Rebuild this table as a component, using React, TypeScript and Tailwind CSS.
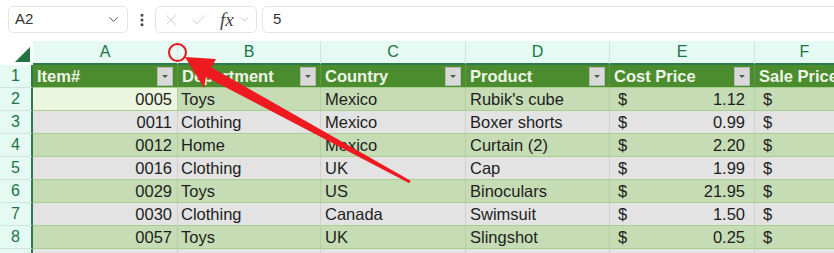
import { Check, ChevronDown, EllipsisVertical, X } from "lucide-react";

const COLS = [
  { key: "A", w: "w-[145px]" },
  { key: "B", w: "w-[143px]" },
  { key: "C", w: "w-[145px]" },
  { key: "D", w: "w-[144px]" },
  { key: "E", w: "w-[145px]" },
  { key: "F", w: "w-[100px]" },
];

const HEADERS = ["Item#", "Department", "Country", "Product", "Cost Price", "Sale Price"];

const ROWS = [
  ["0005", "Toys", "Mexico", "Rubik's cube", "1.12"],
  ["0011", "Clothing", "Mexico", "Boxer shorts", "0.99"],
  ["0012", "Home", "Mexico", "Curtain (2)", "2.20"],
  ["0016", "Clothing", "UK", "Cap", "1.99"],
  ["0029", "Toys", "US", "Binoculars", "21.95"],
  ["0030", "Clothing", "Canada", "Swimsuit", "1.50"],
  ["0057", "Toys", "UK", "Slingshot", "0.25"],
];

function FilterButton() {
  return (
    <div className="ml-auto mr-[4px] flex h-[19px] w-[16px] shrink-0 items-center justify-center border border-[#b9b9b9] bg-[#d9d9d9]">
      <div className="h-0 w-0 border-x-[3px] border-t-[3px] border-x-transparent border-t-[#555]" />
    </div>
  );
}

function RowHeader({ n }: { n?: number }) {
  return (
    <div className="flex h-full w-[33px] shrink-0 items-center justify-center border-r-2 border-b border-r-[#2c7a4c] border-b-[#cfe6da] bg-[#e4faf2] text-[16px] text-[#217346]">
      {n}
    </div>
  );
}

export default function App() {
  return (
    <div
      className="relative h-[253px] w-[834px] overflow-hidden bg-white text-[#1e1e1e]"
      style={{ fontFamily: '"Liberation Sans", Arial, sans-serif' }}
    >
      {/* toolbar */}
      <div className="flex h-[41px] items-start pl-[8px] pt-[6px]">
        <div className="flex h-[27px] w-[120px] shrink-0 items-center justify-between rounded-[5px] border border-[#e4e4e4] pl-[6px] pr-[6px] text-[15px] text-[#333]">
          <span>A2</span>
          <ChevronDown size={15} strokeWidth={1.6} className="text-[#555]" />
        </div>
        <div className="flex h-[27px] w-[27px] shrink-0 items-center justify-center text-[#444]">
          <EllipsisVertical size={16} strokeWidth={2.6} />
        </div>
        <div className="flex h-[27px] w-[102px] shrink-0 items-center rounded-[5px] border border-[#e4e4e4] pl-[6px]">
          <X size={18} strokeWidth={1.2} className="text-[#c9c9c9]" />
          <Check size={18} strokeWidth={1.2} className="ml-[10px] text-[#c9c9c9]" />
          <span
            className="ml-[12px] text-[19px] italic leading-none text-[#444]"
            style={{ fontFamily: '"Liberation Serif", serif' }}
          >
            fx
          </span>
          <ChevronDown size={13} strokeWidth={1.4} className="ml-[4px] text-[#aaa]" />
        </div>
        <div className="ml-[5px] mr-[-10px] flex h-[27px] flex-1 items-center rounded-[5px] border border-[#e4e4e4] pl-[10px] text-[15px] text-[#333]">
          5
        </div>
      </div>

      {/* column letters */}
      <div className="flex h-[24px]">
        <div className="flex w-[33px] shrink-0 items-end justify-end pb-[3px] pr-[3px]">
          <div className="h-0 w-0 border-b-[15px] border-l-[15px] border-b-[#217346] border-l-transparent" />
        </div>
        {COLS.map((c) => (
          <div
            key={c.key}
            className={`${c.w} flex shrink-0 items-center justify-center border-b-2 border-r border-b-[#2c7a4c] border-r-[#cde8dc] bg-[#e4faf2] text-[16px] text-[#217346]`}
          >
            {c.key}
          </div>
        ))}
      </div>

      {/* table header row */}
      <div className="flex h-[23px]">
        <RowHeader n={1} />
        {HEADERS.map((h, i) => (
          <div
            key={h}
            className={`${COLS[i].w} flex shrink-0 items-center border-b border-r border-b-[#a6cf90] border-r-[#5d9a3f] bg-[#4b8d2e] pl-[4px] text-[16.5px] font-bold text-[#eef4e8] whitespace-nowrap`}
          >
            <span>{h}</span>
            {i < 5 && <FilterButton />}
          </div>
        ))}
      </div>

      {/* data rows */}
      {ROWS.map((r, idx) => {
        const green = idx % 2 === 0;
        const bg = green ? "bg-[#c6dcb5]" : "bg-[#e3e3e3]";
        const line = green ? "border-r-[#b6cfa4]" : "border-r-[#d0d0d0]";
        return (
          <div key={r[0]} className="flex h-[23px] text-[16.5px]">
            <RowHeader n={idx + 2} />
            <div
              className={`${COLS[0].w} flex shrink-0 items-center justify-end border-b border-r border-b-[#a6cf90] pr-[5px] ${line} ${
                idx === 0 ? "bg-[#ecf5dd]" : bg
              }`}
            >
              {r[0]}
            </div>
            <div className={`${COLS[1].w} flex shrink-0 items-center border-b border-r border-b-[#a6cf90] pl-[3px] ${line} ${bg}`}>
              {r[1]}
            </div>
            <div className={`${COLS[2].w} flex shrink-0 items-center border-b border-r border-b-[#a6cf90] pl-[4px] ${line} ${bg}`}>
              {r[2]}
            </div>
            <div className={`${COLS[3].w} flex shrink-0 items-center border-b border-r border-b-[#a6cf90] pl-[4px] ${line} ${bg}`}>
              {r[3]}
            </div>
            <div
              className={`${COLS[4].w} flex shrink-0 items-center justify-between border-b border-r border-b-[#a6cf90] pl-[8px] pr-[9px] ${line} ${bg}`}
            >
              <span>$</span>
              <span>{r[4]}</span>
            </div>
            <div className={`${COLS[5].w} flex shrink-0 items-center border-b border-b-[#a6cf90] pl-[8px] ${bg}`}>
              $
            </div>
          </div>
        );
      })}

      {/* row 9, cut off by the window */}
      <div className="flex h-[23px]">
        <RowHeader />
        {COLS.map((c) => (
          <div key={c.key} className={`${c.w} shrink-0 border-r border-r-[#d0d0d0] bg-[#e3e3e3]`} />
        ))}
      </div>

      {/* annotation arrow + circle */}
      <svg className="pointer-events-none absolute left-0 top-0" width="834" height="253" viewBox="0 0 834 253">
        <circle cx="177.5" cy="52.5" r="8.5" fill="none" stroke="#e8161c" strokeWidth="2" />
        <polygon
          points="185,57 216,59 211.5,67.6 410.7,180.7 409.3,183.3 206,77 204,88"
          fill="#ee1a1f"
        />
      </svg>
    </div>
  );
}
